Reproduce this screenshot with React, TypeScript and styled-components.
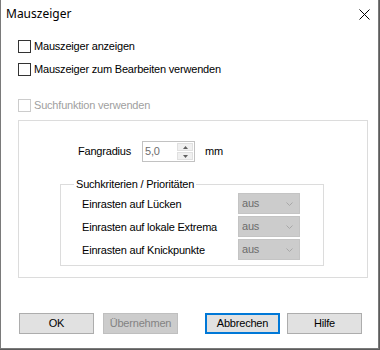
import React from "react";
import styled, { createGlobalStyle } from "styled-components";

const Global = createGlobalStyle`
  html, body { margin: 0; padding: 0; background: #5c5c5c; }
  body { width: 380px; height: 350px; overflow: hidden; }
  * { box-sizing: border-box; }
`;

const UI = `"Liberation Sans", Arial, sans-serif`;

const Window = styled.div`
  width: 379px;
  height: 349px;
  background: #ffffff;
  border-left: 1px solid #7a7a7a;
  border-right: 1px solid #7a7a7a;
  border-bottom: 1px solid #7a7a7a;
  display: flex;
  flex-direction: column;
  font-family: ${UI};
  font-size: 11px;
  letter-spacing: -0.2px;
  color: #000;
`;

const TitleBar = styled.div`
  height: 28px;
  display: flex;
  align-items: center;
  justify-content: space-between;
  padding: 0 8px 0 5px;
`;

const Title = styled.span`
  font-family: "Noto Sans", "Open Sans", sans-serif;
  font-size: 12px;
  line-height: 14px;
  letter-spacing: 0;
  color: #000;
`;

const CloseIcon = styled.svg`
  width: 11px;
  height: 11px;
`;

const Content = styled.div`
  flex: 1;
  display: flex;
  flex-direction: column;
  padding: 0 0 0 17px;
`;

const CheckRow = styled.label<{ $top: number; $disabled?: boolean }>`
  display: flex;
  align-items: center;
  height: 13px;
  margin-top: ${(p) => p.$top}px;
  line-height: 13px;
  color: ${(p) => (p.$disabled ? "#a0a0a0" : "#000")};
`;

const Box = styled.span<{ $disabled?: boolean }>`
  width: 13px;
  height: 13px;
  border: 1px solid ${(p) => (p.$disabled ? "#cccccc" : "#333333")};
  background: #fff;
  margin-right: 3px;
  flex: none;
`;

const Panel = styled.div`
  margin-top: 8px;
  width: 350px;
  height: 158px;
  border: 1px solid #dcdcdc;
  padding: 20px 0 0 41px;
  display: flex;
  flex-direction: column;
  align-items: flex-start;
`;

const FieldRow = styled.div`
  display: flex;
  align-items: center;
  height: 21px;
  margin-left: 18px;
`;

const FieldLabel = styled.span`
  width: 64px;
  line-height: 13px;
`;

const Spin = styled.div`
  width: 53px;
  height: 21px;
  border: 1px solid #c2c2c2;
  display: flex;
  background: #fff;
`;

const SpinValue = styled.span`
  flex: 1;
  padding-left: 2px;
  line-height: 19px;
  color: #6d6d6d;
`;

const SpinButtons = styled.div`
  width: 17px;
  display: flex;
  flex-direction: column;
  gap: 1px;
  padding: 1px 1px 1px 0;
`;

const SpinBtn = styled.div`
  flex: 1;
  background: #f0f0f0;
  border: 1px solid #e0e0e0;
  display: flex;
  align-items: center;
  justify-content: center;
`;

const Unit = styled.span`
  margin-left: 10px;
  line-height: 13px;
`;

const Group = styled.fieldset`
  display: block;
  margin: 16px 0 0 0;
  width: 264px;
  min-width: 0;
  border: 1px solid #dcdcdc;
  padding: 0;
`;

const Legend = styled.legend`
  margin: 0 0 0 13px;
  padding: 0 2px;
  line-height: 13px;
  font-size: 11px;
`;

const Rows = styled.div`
  display: flex;
  flex-direction: column;
  gap: 2px;
  padding: 2px 23px 5px 21px;
`;

const ComboRow = styled.div`
  display: flex;
  align-items: center;
  justify-content: space-between;
  height: 21px;
`;

const Combo = styled.div`
  width: 62px;
  height: 21px;
  background: #cccccc;
  border: 1px solid #c4c4c4;
  display: flex;
  align-items: center;
  justify-content: space-between;
  padding: 0 6px 0 3px;
  color: #6d6d6d;
  line-height: 13px;
`;

const Buttons = styled.div`
  display: flex;
  margin-top: 35px;
  margin-left: 1px;
`;

const Button = styled.button<{ $gap?: number; $disabled?: boolean; $default?: boolean }>`
  width: 75px;
  height: 21px;
  margin-left: ${(p) => p.$gap ?? 0}px;
  padding: 0;
  font-family: ${UI};
  font-size: 11px;
  letter-spacing: -0.2px;
  line-height: 13px;
  color: ${(p) => (p.$disabled ? "#838383" : "#000")};
  background: ${(p) => (p.$disabled ? "#cccccc" : "#e1e1e1")};
  border: ${(p) =>
    p.$default ? "2px solid #0078d7" : p.$disabled ? "1px solid #bfbfbf" : "1px solid #adadad"};
  outline: none;
`;

const Chevron = () => (
  <svg width="7" height="4" viewBox="0 0 7 4">
    <path d="M0.5 0.5 L3.5 3.5 L6.5 0.5" fill="none" stroke="#a8a8a8" strokeWidth="1" />
  </svg>
);

const rows = ["Einrasten auf Lücken", "Einrasten auf lokale Extrema", "Einrasten auf Knickpunkte"];

export default function App() {
  return (
    <>
      <Global />
      <Window>
        <TitleBar>
          <Title>Mauszeiger</Title>
          <CloseIcon viewBox="0 0 11 11">
            <path d="M0.5 0.5 L10.5 10.5 M10.5 0.5 L0.5 10.5" stroke="#000" strokeWidth="1" />
          </CloseIcon>
        </TitleBar>
        <Content>
          <CheckRow $top={12}>
            <Box />
            Mauszeiger anzeigen
          </CheckRow>
          <CheckRow $top={10}>
            <Box />
            Mauszeiger zum Bearbeiten verwenden
          </CheckRow>
          <CheckRow $top={23} $disabled>
            <Box $disabled />
            Suchfunktion verwenden
          </CheckRow>
          <Panel>
            <FieldRow>
              <FieldLabel>Fangradius</FieldLabel>
              <Spin>
                <SpinValue>5,0</SpinValue>
                <SpinButtons>
                  <SpinBtn>
                    <svg width="5" height="3" viewBox="0 0 5 3">
                      <path d="M2.5 0 L5 3 L0 3 Z" fill="#606060" />
                    </svg>
                  </SpinBtn>
                  <SpinBtn>
                    <svg width="5" height="3" viewBox="0 0 5 3">
                      <path d="M0 0 L5 0 L2.5 3 Z" fill="#606060" />
                    </svg>
                  </SpinBtn>
                </SpinButtons>
              </Spin>
              <Unit>mm</Unit>
            </FieldRow>
            <Group>
              <Legend>Suchkriterien / Prioritäten</Legend>
              <Rows>
                {rows.map((r) => (
                  <ComboRow key={r}>
                    <span>{r}</span>
                    <Combo>
                      <span>aus</span>
                      <Chevron />
                    </Combo>
                  </ComboRow>
                ))}
              </Rows>
            </Group>
          </Panel>
          <Buttons>
            <Button>OK</Button>
            <Button $gap={9} $disabled>
              Übernehmen
            </Button>
            <Button $gap={27} $default>
              Abbrechen
            </Button>
            <Button $gap={7}>Hilfe</Button>
          </Buttons>
        </Content>
      </Window>
    </>
  );
}
